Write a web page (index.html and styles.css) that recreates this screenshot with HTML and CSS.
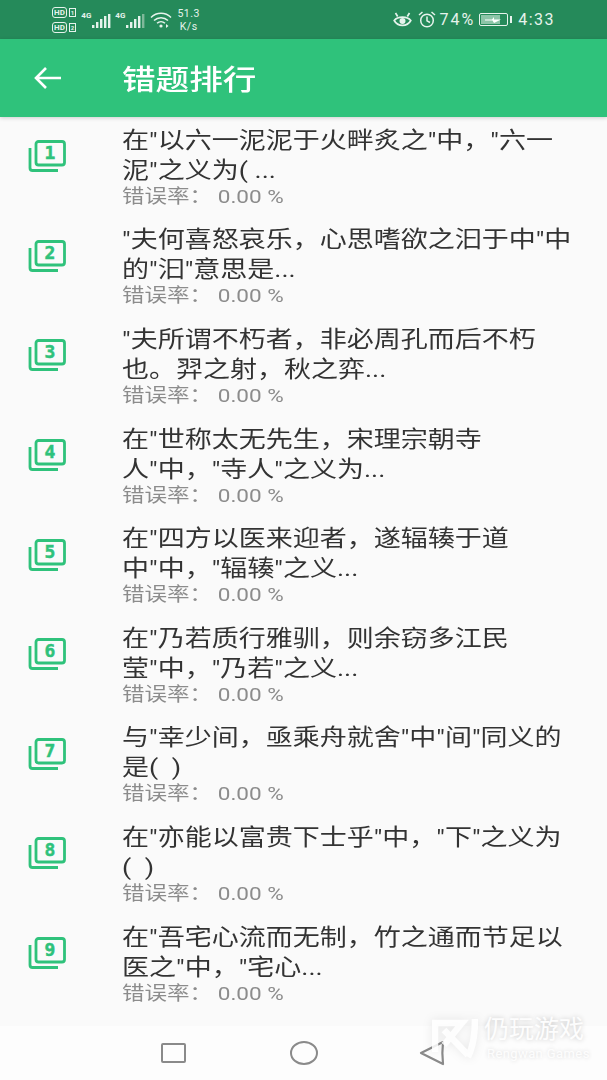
FILE: index.html
```html
<!DOCTYPE html>
<html lang="zh-CN">
<head>
    <meta charset="UTF-8">
    <meta name="viewport" content="width=device-width, initial-scale=1.0">
    <title>错题排行</title>
    <link rel="stylesheet" href="styles.css">
</head>
<body>
    <svg class="defs" width="0" height="0">
        <symbol id="stack" viewBox="0 0 38 32">
            <path d="M2 8v20a2.500 2.500 0 0 0 2.500 2.500H30" fill="none" stroke="currentColor" stroke-width="2.800"/>
            <rect x="8" y="1.500" width="28.500" height="23.500" rx="2.500" fill="none" stroke="currentColor" stroke-width="2.800"/>
        </symbol>
    </svg>

    <div class="status-bar">
        <div class="status-left">
            <div class="hd-group">
                <div class="hd-row"><span class="hd">HD</span><span class="sim">1</span></div>
                <div class="hd-row"><span class="hd">HD</span><span class="sim">2</span></div>
            </div>
            <div class="signal">
                <span class="net">4G</span>
                <svg width="20" height="16" viewBox="0 0 20 16"><g fill="#e6f3ec"><rect x="1" y="12" width="2.400" height="3"/><rect x="5" y="9" width="2.400" height="6"/><rect x="9" y="6" width="2.400" height="9"/><rect x="13" y="3" width="2.400" height="12"/><rect x="17" y="1" width="2.400" height="14"/></g></svg>
            </div>
            <div class="signal">
                <span class="net">4G</span>
                <svg width="20" height="16" viewBox="0 0 20 16"><g fill="#e6f3ec"><rect x="1" y="12" width="2.400" height="3"/><rect x="5" y="9" width="2.400" height="6"/><rect x="9" y="6" width="2.400" height="9"/><rect x="13" y="3" width="2.400" height="12"/></g><rect x="17" y="1" width="2.400" height="14" fill="#7fb89a"/></svg>
            </div>
            <svg class="wifi" width="22" height="16" viewBox="0 0 22 16"><g fill="none" stroke="#e6f3ec" stroke-width="1.500"><path d="M1 5.500a14 14 0 0 1 20 0"/><path d="M4 8.500a10 10 0 0 1 14 0"/><path d="M7 11.200a6 6 0 0 1 8 0"/></g><circle cx="11" cy="14" r="1.600" fill="#e6f3ec"/><path d="M16 12l2.500 2-2.500 2zM20 12v4" fill="#e6f3ec"/></svg>
            <div class="speed">51.3<br>K/s</div>
        </div>
        <div class="status-right">
            <svg width="19" height="15" viewBox="0 0 19 15"><g fill="none" stroke="#e6f3ec" stroke-width="1.700"><path d="M1.200 8.500c3.500-4.500 13-4.500 16.600 0-3.600 6.500-13 6.500-16.600 0z"/><path d="M2.500 1l2.200 3.500M16.500 1l-2.200 3.500"/></g><circle cx="9.500" cy="9" r="3" fill="#e6f3ec"/></svg>
            <svg class="alarm" width="18" height="17" viewBox="0 0 18 17"><g fill="none" stroke="#e6f3ec" stroke-width="1.500"><circle cx="9" cy="9.500" r="6.300"/><path d="M9 5.500v4.300l3 1.700M1 4l3.500-3M17 4l-3.500-3"/></g></svg>
            <span class="pct">74%</span>
            <div class="battery">
                <div class="battery-fill"></div>
                <svg class="bolt" width="16" height="6" viewBox="0 0 16 6"><path d="M0 2.500h7L9 0v2.500h7L9 6 7.500 3.500H0z" fill="#fff"/></svg>
            </div>
            <div class="battery-cap"></div>
            <span class="clock">4:33</span>
        </div>
    </div>

    <div class="app-bar">
        <svg class="back" width="30" height="24" viewBox="0 0 30 24"><path d="M28 12H3M13 2L3 12l10 10" fill="none" stroke="#fff" stroke-width="2.600"/></svg>
        <h1>错题排行</h1>
    </div>

    <ul class="rank-list">
        <li class="rank-item">
            <div class="rank-icon"><svg width="38" height="32"><use href="#stack"/></svg><span>1</span></div>
            <div class="rank-text">
                <p class="question">在"以六一泥泥于火畔炙之"中，"六一<br>泥"之义为( ...</p>
                <p class="rate">错误率： 0.00 %</p>
            </div>
        </li>
        <li class="rank-item">
            <div class="rank-icon"><svg width="38" height="32"><use href="#stack"/></svg><span>2</span></div>
            <div class="rank-text">
                <p class="question">"夫何喜怒哀乐，心思嗜欲之汩于中"中<br>的"汩"意思是...</p>
                <p class="rate">错误率： 0.00 %</p>
            </div>
        </li>
        <li class="rank-item">
            <div class="rank-icon"><svg width="38" height="32"><use href="#stack"/></svg><span>3</span></div>
            <div class="rank-text">
                <p class="question">"夫所谓不朽者，非必周孔而后不朽<br>也。羿之射，秋之弈...</p>
                <p class="rate">错误率： 0.00 %</p>
            </div>
        </li>
        <li class="rank-item">
            <div class="rank-icon"><svg width="38" height="32"><use href="#stack"/></svg><span>4</span></div>
            <div class="rank-text">
                <p class="question">在"世称太无先生，宋理宗朝寺<br>人"中，"寺人"之义为...</p>
                <p class="rate">错误率： 0.00 %</p>
            </div>
        </li>
        <li class="rank-item">
            <div class="rank-icon"><svg width="38" height="32"><use href="#stack"/></svg><span>5</span></div>
            <div class="rank-text">
                <p class="question">在"四方以医来迎者，遂辐辏于道<br>中"中，"辐辏"之义...</p>
                <p class="rate">错误率： 0.00 %</p>
            </div>
        </li>
        <li class="rank-item">
            <div class="rank-icon"><svg width="38" height="32"><use href="#stack"/></svg><span>6</span></div>
            <div class="rank-text">
                <p class="question">在"乃若质行雅驯，则余窃多江民<br>莹"中，"乃若"之义...</p>
                <p class="rate">错误率： 0.00 %</p>
            </div>
        </li>
        <li class="rank-item">
            <div class="rank-icon"><svg width="38" height="32"><use href="#stack"/></svg><span>7</span></div>
            <div class="rank-text">
                <p class="question">与"幸少间，亟乘舟就舍"中"间"同义的<br>是(&nbsp;&nbsp;)</p>
                <p class="rate">错误率： 0.00 %</p>
            </div>
        </li>
        <li class="rank-item">
            <div class="rank-icon"><svg width="38" height="32"><use href="#stack"/></svg><span>8</span></div>
            <div class="rank-text">
                <p class="question">在"亦能以富贵下士乎"中，"下"之义为<br>(&nbsp;&nbsp;)</p>
                <p class="rate">错误率： 0.00 %</p>
            </div>
        </li>
        <li class="rank-item">
            <div class="rank-icon"><svg width="38" height="32"><use href="#stack"/></svg><span>9</span></div>
            <div class="rank-text">
                <p class="question">在"吾宅心流而无制，竹之通而节足以<br>医之"中，"宅心...</p>
                <p class="rate">错误率： 0.00 %</p>
            </div>
        </li>
    </ul>

    <div class="nav-bar">
        <div class="nav-square"></div>
        <div class="nav-circle"></div>
        <svg class="nav-back" width="26" height="26" viewBox="0 0 26 26"><path d="M24 2L2 13l22 11c-.8-7-.8-15 0-22z" fill="none" stroke="#8a8a8a" stroke-width="2.200" stroke-linejoin="round"/></svg>
    </div>

    <div class="watermark">
        <svg class="mark-logo" width="46" height="42" viewBox="0 0 46 42"><path d="M0 5h30L12 27M3 6v28M12 12l24 25M43 1c0 18-2 28-7 38" fill="none" stroke="#fff" stroke-width="6.500" opacity=".85"/></svg>
        <div class="mark-text">
            <div class="mark-cn">仍玩游戏</div>
            <div class="mark-en">Rengwan Games</div>
        </div>
    </div>
</body>
</html>
```

FILE: styles.css
```css
* {
    box-sizing: border-box;
}
html, body {
    margin: 0;
    padding: 0;
}
body {
    position: relative;
    width: 607px;
    height: 1080px;
    overflow: hidden;
    display: flex;
    flex-direction: column;
    background-color: #fafafa;
    font-family: Roboto, "Noto Sans CJK SC", sans-serif;
}
.defs {
    position: absolute;
}

/* status bar */
.status-bar {
    height: 39px;
    flex: none;
    display: flex;
    justify-content: space-between;
    align-items: center;
    padding: 0 52px;
    background-color: #258a5a;
    color: #e6f3ec;
}
.status-left, .status-right {
    display: flex;
    align-items: center;
}
.hd-row {
    display: flex;
    align-items: center;
    height: 15px;
    gap: 2px;
}
.hd {
    font-size: 8px;
    line-height: 9px;
    font-weight: 700;
    border: 1px solid #e6f3ec;
    border-radius: 3px;
    padding: 0 1px;
}
.sim {
    font-size: 6px;
    line-height: 7px;
    font-weight: 700;
    border: 1px solid #e6f3ec;
    padding: 0 1px;
}
.signal {
    display: flex;
    align-items: flex-end;
    margin-left: 5px;
    height: 18px;
}
.signal + .signal {
    margin-left: 4px;
}
.net {
    font-size: 8px;
    font-weight: 700;
    align-self: flex-start;
}
.wifi {
    margin-left: 5px;
}
.speed {
    margin-left: 5px;
    font-size: 10.500px;
    line-height: 13px;
    text-align: center;
    letter-spacing: .5px;
}
.alarm {
    margin-left: 6px;
}
.pct {
    margin-left: 3px;
    font-size: 16px;
    letter-spacing: 2px;
}
.battery {
    position: relative;
    width: 29px;
    height: 13px;
    margin-left: 4px;
    border: 1px solid #e6f3ec;
    border-radius: 2px;
    padding: 1px;
}
.battery-fill {
    width: 74%;
    height: 100%;
    background-color: #8cc5a8;
}
.bolt {
    position: absolute;
    left: 5px;
    top: 2.500px;
}
.battery-cap {
    width: 2px;
    height: 7px;
    margin-left: 2px;
    background-color: #e6f3ec;
}
.clock {
    margin-left: 6px;
    font-size: 16px;
    letter-spacing: 1.500px;
}

/* app bar */
.app-bar {
    height: 78px;
    flex: none;
    display: flex;
    align-items: center;
    background-color: #2fc27b;
    box-shadow: 0 1px 4px rgba(0, 0, 0, 0.18);
    position: relative;
}
.back {
    margin-left: 33px;
}
.app-bar h1 {
    margin: 0 0 0 59px;
    color: #fff;
    font-size: 28px;
    font-weight: 500;
    transform: scaleX(1.2);
    transform-origin: left center;
}

/* list */
.rank-list {
    list-style: none;
    margin: 0;
    padding: 0;
    flex: 1;
}
.rank-item {
    display: flex;
    align-items: center;
    height: 99.600px;
    padding-left: 28px;
}
.rank-icon {
    position: relative;
    width: 38px;
    height: 32px;
    color: #2fc27b;
    margin-bottom: 21px;
}
.rank-icon svg {
    display: block;
}
.rank-icon span {
    position: absolute;
    left: 9px;
    top: 0;
    width: 26px;
    text-align: center;
    font-family: "DejaVu Sans Mono", monospace;
    font-size: 18px;
    font-weight: 700;
    line-height: 26px;
    -webkit-text-stroke: .5px #2fc27b;
}
.rank-text {
    margin-left: 55.500px;
    transform: scaleX(1.2);
    transform-origin: left center;
}
.question {
    margin: 0;
    font-size: 22.500px;
    line-height: 30px;
    color: #333;
}
.rate {
    margin: 0;
    font-size: 18.800px;
    line-height: 24px;
    color: #8c8c8c;
}

/* nav bar */
.nav-bar {
    height: 54px;
    flex: none;
    display: flex;
    align-items: center;
    padding-left: 161px;
    background-color: #fdfdfd;
}
.nav-square {
    width: 25px;
    height: 20px;
    border: 2.500px solid #8a8a8a;
    border-radius: 2px;
}
.nav-circle {
    width: 28px;
    height: 24px;
    margin-left: 104px;
    border: 2.500px solid #8a8a8a;
    border-radius: 50%;
}
.nav-back {
    margin-left: 101px;
}

/* watermark */
.watermark {
    position: absolute;
    left: 432px;
    top: 1016px;
    display: flex;
    gap: 6px;
    align-items: flex-start;
}
.mark-logo {
    margin-top: 2px;
    filter: drop-shadow(0 0 5px rgba(0, 0, 0, 0.1));
}
.mark-cn {
    font-size: 25px;
    line-height: 27px;
    color: rgba(255, 255, 255, 0.95);
    text-shadow: 0 0 5px rgba(0, 0, 0, 0.22);
}
.mark-en {
    margin-top: 3px;
    margin-left: 3px;
    font-size: 13px;
    line-height: 16px;
    letter-spacing: .4px;
    color: rgba(255, 255, 255, 0.9);
    text-shadow: 0 0 4px rgba(0, 0, 0, 0.16);
}
```
